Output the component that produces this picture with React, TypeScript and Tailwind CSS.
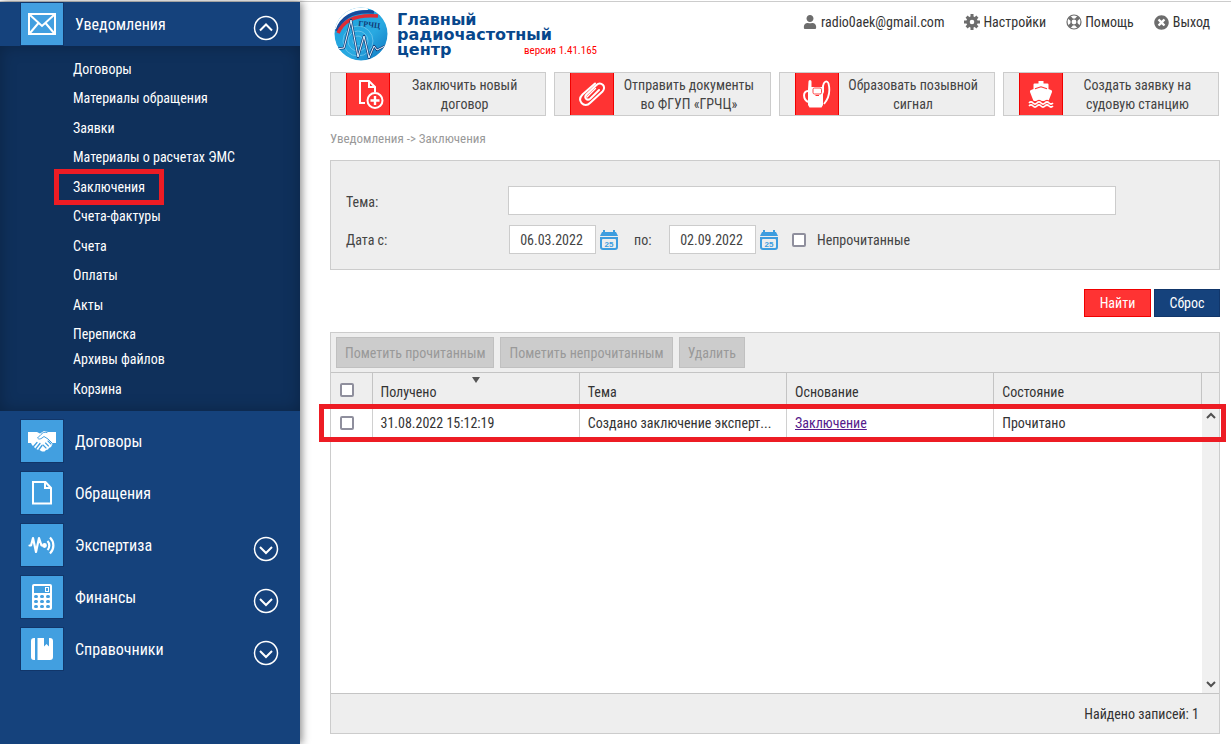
import type { ReactNode } from 'react';
import { FaUser, FaTimesCircle } from 'react-icons/fa';

const submenu = [
    'Договоры',
    'Материалы обращения',
    'Заявки',
    'Материалы о расчетах ЭМС',
    'Заключения',
    'Счета-фактуры',
    'Счета',
    'Оплаты',
    'Акты',
    'Переписка',
];

/* Icons */

function EnvelopeIcon() {
    return (
        <svg width="28" height="22" viewBox="0 0 28 22" fill="none" stroke="#fff" strokeWidth="2">
            <rect x="1" y="1" width="26" height="20" />
            <path d="M2 2l12 11L26 2M2 20l8.500-10M26 20l-8.500-10" />
        </svg>
    );
}

function HandshakeIcon() {
    return (
        <svg width="28" height="22" viewBox="0 0 28 22">
            <path d="M0 2h9l3 1.500L16 1l4 1h8v11h-3l-1 2-1 2-2 1-1 1.500-2 .5-1.500 1.500H14L11.500 20 9 19.500 7 18l-3-3-1-2H0z" fill="#fff" />
            <g fill="none" stroke="#429fe0" strokeLinecap="round">
                <path d="M19 2.500c-3-1-4.500.5-6 2L9.500 8c1 1.500 3 1.200 4.500 0l2-1.500 4 2.500 4.500 4.500" />
                <path d="M5.500 16.500l3.500-4M8 18.500l4-5M11 19.500l3-4" strokeWidth="1.300" />
                <path d="M15 15l3 3M17.500 13l3 3M20 11l3 3" strokeWidth="1.100" />
            </g>
        </svg>
    );
}

function DocumentIcon() {
    return (
        <svg width="22" height="26" viewBox="0 0 22 26" fill="none" stroke="#fff" strokeWidth="2">
            <path d="M2 2h12.500L20 8v15.500H2zM14 2v6h6" />
        </svg>
    );
}

function SignalIcon() {
    return (
        <svg width="28" height="20" viewBox="0 0 28 20" fill="none" stroke="#fff" strokeWidth="2.200" strokeLinejoin="round" strokeLinecap="round">
            <path d="M1.500 10.500h1.500L5 3l3 14 3-14 2.500 7.500h3" />
            <circle cx="16.500" cy="10.500" r="1.300" fill="#fff" />
            <path d="M19.500 6a6.500 6.500 0 0 1 0 9M22 2.500c4.500 4.500 4.500 11.500 0 16" strokeLinecap="butt" />
        </svg>
    );
}

function CalculatorIcon() {
    return (
        <svg width="20" height="26" viewBox="0 0 20 26">
            <rect width="20" height="26" rx="2" fill="#fff" />
            <rect x="2" y="2" width="16" height="7" fill="#429fe0" />
            <rect x="13.500" y="3.500" width="3" height="4" fill="none" stroke="#fff" />
            {[11, 16, 21].map((y) =>
                [2, 8, 14].map((x) => <rect key={`${x}-${y}`} x={x} y={y} width="4" height="3" rx="1.500" fill="#429fe0" />),
            )}
        </svg>
    );
}

function BookIcon() {
    return (
        <svg width="24" height="24" viewBox="0 0 24 24" fill="#fff">
            <path d="M5 1v22H4a3 3 0 0 1-3-3V4a3 3 0 0 1 3-3zM7.500 1H14v8.500l2.500-2.500L19 9.500V1h1a3 3 0 0 1 3 3v16a3 3 0 0 1-3 3H7.500z" />
        </svg>
    );
}

function NewContractIcon() {
    return (
        <svg width="26" height="32" viewBox="0 0 26 32" fill="none" stroke="#fff" strokeWidth="2" className="ml-[6px]">
            <path d="M7 25H2V3h9l6 6v5M11 3v6h6" />
            <circle cx="17" cy="22.500" r="7.500" />
            <path d="M17 18v9M12.500 22.500h9" strokeWidth="2.400" />
        </svg>
    );
}

function ClipIcon() {
    return (
        <svg width="28" height="28" viewBox="0 0 28 28" fill="none" stroke="#fff" strokeWidth="2" strokeLinecap="round">
            <path d="M17 3.500L4.500 14.500c-3 3-3 6-1 8.500 2.500 2.500 6 2.500 8.500 0L24.500 11.500c2-2 2-5 .5-6.500-2-2-4.500-2-6.500 0L8.500 14.500c-1.500 1.500-1.500 3-.5 4.200 1.200 1.200 3 1 4.200 0L21 10" />
            <path d="M9 17l8.500-8.500" strokeWidth="1.400" />
        </svg>
    );
}

function RadioIcon() {
    return (
        <svg width="28" height="28" viewBox="0 0 28 28">
            <path d="M5.500 1.500Q5.500 0 7 0t1.500 1.500V7H19V5.500h2V12l-1 2v11l-1.500 2.500h-12L5 25V9.500z" fill="#fff" />
            <path d="M5 11c-5.500 0-5 8.500 0 11" fill="none" stroke="#fff" strokeWidth="2" />
            <path d="M20 8c0-7 4.500-8 5.500-4.500 1.500 6 1 14-4.500 20.500" fill="none" stroke="#fff" strokeWidth="1.800" />
            <rect x="10" y="8" width="8.500" height="6" rx="1.500" fill="#fff" stroke="#ff3333" strokeWidth="0.900" />
            <path d="M12.500 15.500h3.500" stroke="#ff3333" />
        </svg>
    );
}

function ShipIcon() {
    return (
        <svg width="26" height="28" viewBox="0 0 26 28">
            <path d="M10.500 1h5v2.500h4q1 0 1 1V9l2.500 1q1.500.5 1 2l-3.500 9H5.500L2 12q-.5-1.500 1-2l2.500-1V4.500q0-1 1-1h4z" fill="#fff" />
            <path d="M7 8.700l6-1.900 6 1.900" fill="none" stroke="#ff3333" strokeWidth="1.200" />
            <path d="M1 22.500q2-2 4 0t4 0 4 0 4 0 4 0 4 0" fill="none" stroke="#ff3333" strokeWidth="3.400" />
            <path d="M1 23q2-2 4 0t4 0 4 0 4 0 4 0 4 0M1 26q2-2 4 0t4 0 4 0 4 0 4 0 4 0" fill="none" stroke="#fff" strokeWidth="1.700" />
        </svg>
    );
}

function GearIcon() {
    return (
        <svg width="16" height="16" viewBox="0 0 16 16" fill="none" stroke="#6d6d6d">
            <circle cx="8" cy="8" r="4" strokeWidth="3.400" />
            <path d="M8 0v3M8 13v3M0 8h3M13 8h3M2.600 2.600l2 2M11.400 11.400l2 2M2.600 13.400l2-2M11.400 4.600l2-2" strokeWidth="3" />
        </svg>
    );
}

function LifebuoyIcon() {
    return (
        <svg width="16" height="16" viewBox="0 0 16 16" fill="none" stroke="#6d6d6d">
            <circle cx="8" cy="8" r="7" strokeWidth="1.200" />
            <circle cx="8" cy="8" r="3" strokeWidth="1.200" />
            <path d="M3.300 3.300l2.500 2.500M12.700 3.300l-2.500 2.500M3.300 12.700l2.500-2.500M12.700 12.700l-2.500-2.500" strokeWidth="3.400" />
        </svg>
    );
}

function CalendarIcon() {
    return (
        <svg width="18" height="20" viewBox="0 0 18 20">
            <path d="M3 0h2v2h8V0h2v2h1l2 4H0l2-4h1z" fill="#3d9ddf" />
            <rect x="1" y="8" width="16" height="11" rx="2" fill="#eee" stroke="#3d9ddf" strokeWidth="2" />
            <path d="M0 7h18v2H0z" fill="#3d9ddf" />
            <text x="9" y="17" fontSize="8" fontWeight="bold" textAnchor="middle" fill="#3d9ddf" fontFamily="Liberation Sans, sans-serif">25</text>
        </svg>
    );
}

function Chevron({ up = false }: { up?: boolean }) {
    return (
        <svg width="26" height="26" viewBox="0 0 26 26" fill="none" stroke="#fff">
            <circle cx="13" cy="13" r="11.500" strokeWidth="1.500" />
            <path d={up ? 'M7 15.500l6-6 6 6' : 'M7 11l6 6 6-6'} strokeWidth="2" />
        </svg>
    );
}

function LogoMark() {
    return (
        <svg width="54" height="54" viewBox="0 0 54 54">
            <defs>
                <linearGradient id="globe" x1="0" y1="0" x2="1" y2="1">
                    <stop offset="0" stopColor="#1ba0dc" />
                    <stop offset="0.600" stopColor="#29a9e1" />
                    <stop offset="1" stopColor="#0b72be" />
                </linearGradient>
                <clipPath id="globeClip"><circle cx="27" cy="27" r="26.500" /></clipPath>
            </defs>
            <g clipPath="url(#globeClip)" fill="none">
                <circle cx="27" cy="27" r="27" fill="url(#globe)" />
                <g stroke="#8fd3f2" strokeWidth="0.600">
                    <circle cx="24" cy="34" r="5" />
                    <circle cx="24" cy="34" r="10" />
                    <circle cx="24" cy="34" r="15" />
                </g>
                <path d="M1 22C5 8 17 0 34 1.500" stroke="#fff" strokeWidth="4" />
                <path d="M3 24C7 11 19 3 40 5" stroke="#184a9b" strokeWidth="3.500" />
                <path d="M4 26C9 14 20 7 44 9" stroke="#e02c35" strokeWidth="3.500" />
                <path d="M2 42l8-1 7-28 7 37 6-21 5 22 5-12 3 4 8-4" stroke="#173d78" strokeWidth="2.400" strokeLinejoin="round" />
                <path d="M2 42l8-1 7-28 7 37 6-21 5 22 5-12 3 4 8-4" stroke="#e4f5ff" strokeWidth="1" />
            </g>
            <text x="24" y="19" fontSize="8" fontWeight="bold" fill="#123c78" fontFamily="Liberation Serif, serif" transform="rotate(6 24 19)">ГРЧЦ</text>
        </svg>
    );
}

/* Sidebar */

function MenuItem({ icon, label, chevron }: { icon: ReactNode; label: string; chevron?: 'up' | 'down' }) {
    return (
        <a href="#" className="flex h-11 items-center pl-5 pr-[21px] text-white">
            <span className="flex size-11 items-center justify-center border border-[#11366a] bg-[#429fe0]">{icon}</span>
            <span className="ml-[11px] flex-1 pt-[2px] text-[16px] leading-5">{label}</span>
            {chevron && <span className="pt-2"><Chevron up={chevron === 'up'} /></span>}
        </a>
    );
}

function Sidebar() {
    return (
        <aside className="z-10 w-[300px] shrink-0 bg-[#15427c] shadow-[2px_0_8px_rgba(0,0,0,0.45)]">
            <nav>
                <MenuItem icon={<EnvelopeIcon />} label="Уведомления" chevron="up" />
                <div className="bg-[#0f305b] pb-[2px] pl-[73px] pt-2 text-[14px] leading-5 text-white shadow-[inset_0_0_16px_rgba(0,0,0,0.25)]">
                    <ul className="grid h-[295px] auto-rows-fr items-center">
                        {submenu.map((label) => (
                            <li key={label}>
                                <a href="#" className="relative">
                                    {label}
                                    {label === 'Заключения' && (
                                        <span className="absolute -inset-x-[19px] -inset-y-[10px] border-5 border-[#ed1c24]" />
                                    )}
                                </a>
                            </li>
                        ))}
                    </ul>
                    <a href="#" className="flex h-5 items-center">Архивы файлов</a>
                    <a href="#" className="flex h-10 items-center">Корзина</a>
                </div>
                <div className="flex flex-col gap-2 pt-2">
                    <MenuItem icon={<HandshakeIcon />} label="Договоры" />
                    <MenuItem icon={<DocumentIcon />} label="Обращения" />
                    <MenuItem icon={<SignalIcon />} label="Экспертиза" chevron="down" />
                    <MenuItem icon={<CalculatorIcon />} label="Финансы" chevron="down" />
                    <MenuItem icon={<BookIcon />} label="Справочники" chevron="down" />
                </div>
            </nav>
        </aside>
    );
}

/* Main area */

function Header() {
    return (
        <header className="flex h-[70px] justify-between pl-1 pr-[10px]">
            <div className="flex pt-[5px]">
                <LogoMark />
                <div className="relative ml-[9px] pt-[5px]">
                    <p className="font-['DejaVu_Sans',sans-serif] text-[16px] font-bold leading-[15px] text-[#07478c]">
                        Главный<br />радиочастотный<br />центр
                    </p>
                    <span className="absolute left-[127px] top-9 whitespace-nowrap text-[11px] leading-4 text-[#f00]">версия 1.41.165</span>
                </div>
            </div>
            <div className="flex h-10 items-center gap-5 text-[14px] leading-5 text-[#333]">
                <a href="#" className="flex items-center gap-1"><FaUser size={14} color="#6d6d6d" />radio0aek@gmail.com</a>
                <a href="#" className="flex items-center gap-[3px]"><GearIcon />Настройки</a>
                <a href="#" className="flex items-center gap-[3px]"><LifebuoyIcon />Помощь</a>
                <a href="#" className="flex items-center gap-1"><FaTimesCircle size={15} color="#6d6d6d" />Выход</a>
            </div>
        </header>
    );
}

function ActionButton({ icon, children }: { icon: ReactNode; children: ReactNode }) {
    return (
        <button className="flex h-11 items-stretch border border-[#ccc] bg-[#eee] pl-[15px] text-[14px] leading-[19px] text-[#444]">
            <span className="flex w-11 items-center justify-center border-x border-[#f00000] bg-[#ff3333]">{icon}</span>
            <span className="flex-1 self-center pr-[6px] pt-px">{children}</span>
        </button>
    );
}

function DateField({ id, value }: { id: string; value: string }) {
    return (
        <>
            <input id={id} defaultValue={value} className="h-[29px] w-[87px] border border-[#ccc] bg-white pr-[2px] text-center text-[14px] text-[#444]" />
            <button type="button" aria-label="Календарь" className="ml-1"><CalendarIcon /></button>
        </>
    );
}

const checkbox = 'block size-[14px] appearance-none rounded-[2px] border-2 border-[#8f8f9d] bg-white';

function Filter() {
    return (
        <form>
            <div className="border border-[#ccc] bg-[#eee] pb-[15px] pl-[15px] pt-[25px] text-[14px] leading-5 text-[#444]">
                <div className="flex items-center">
                    <label htmlFor="subject" className="w-[162px] pt-[2px]">Тема:</label>
                    <input id="subject" className="mr-[103px] h-[29px] flex-1 border border-[#ccc] bg-white px-2" />
                </div>
                <div className="mt-[10px] flex items-center">
                    <label htmlFor="from" className="w-[163px]">Дата с:</label>
                    <DateField id="from" value="06.03.2022" />
                    <label htmlFor="to" className="ml-4 w-[35px]">по:</label>
                    <DateField id="to" value="02.09.2022" />
                    <input id="unread" type="checkbox" className={`${checkbox} ml-[14px]`} />
                    <label htmlFor="unread" className="ml-[11px]">Непрочитанные</label>
                </div>
            </div>
            <div className="mt-[19px] flex justify-end gap-[3px] text-[14px] leading-5 text-white">
                <button type="button" className="h-7 w-[67px] border border-[#f00000] bg-[#ff3333]">Найти</button>
                <button type="button" className="h-7 w-[66px] border border-[#11366a] bg-[#15427c]">Сброс</button>
            </div>
        </form>
    );
}

function ToolbarButton({ children }: { children: ReactNode }) {
    return (
        <button disabled className="h-[31px] border border-[#c0c0c0] bg-[#ccc] px-2 text-[14px] leading-5 text-[#999]">{children}</button>
    );
}

function ScrollArrow({ up = false }: { up?: boolean }) {
    return (
        <svg width="10" height="7" viewBox="0 0 10 7" fill="none" stroke="#505050" strokeWidth="2">
            <path d={up ? 'M1 6l4-4 4 4' : 'M1 1l4 4 4-4'} />
        </svg>
    );
}

function Messages() {
    return (
        <section className="mt-[15px] flex flex-1 flex-col border border-[#ccc] bg-[#eee]">
            <div className="flex gap-[6px] p-1 pl-[5px]">
                <ToolbarButton>Пометить прочитанным</ToolbarButton>
                <ToolbarButton>Пометить непрочитанным</ToolbarButton>
                <ToolbarButton>Удалить</ToolbarButton>
            </div>
            <div className="relative flex-1 border-y border-[#c4c4c4] bg-white">
                <table className="w-full table-fixed text-left text-[14px] leading-5 text-[#333]">
                    <colgroup>
                        <col className="w-[41px]" />
                        <col />
                        <col />
                        <col />
                        <col />
                        <col className="w-[18px]" />
                    </colgroup>
                    <thead>
                        <tr className="h-[34px] bg-[#eee] [&>th]:border-r [&>th]:border-[#c4c4c4] [&>th]:font-normal [&>th:last-child]:border-r-0">
                            <th className="pl-[9px]"><input type="checkbox" aria-label="Выбрать все" className={checkbox} /></th>
                            <th className="relative px-2 pt-1">
                                Получено
                                <span className="absolute left-1/2 top-1 -ml-1 border-x-4 border-t-6 border-x-transparent border-t-[#555]" />
                            </th>
                            <th className="px-2 pt-1">Тема</th>
                            <th className="px-2 pt-1">Основание</th>
                            <th className="px-2 pt-1">Состояние</th>
                            <th />
                        </tr>
                    </thead>
                    <tbody>
                        <tr className="relative h-8 [&>td]:border-r [&>td]:border-[#d0d0d0] [&>td:nth-last-child(-n+2)]:border-r-0">
                            <td className="pl-[9px]">
                                <input type="checkbox" aria-label="Выбрать сообщение" className={checkbox} />
                                <span className="pointer-events-none absolute -bottom-[3px] -left-3 -right-[7px] -top-[3px] z-10 border-5 border-[#ed1c24]" />
                            </td>
                            <td className="px-2">31.08.2022 15:12:19</td>
                            <td className="whitespace-nowrap px-2">Создано заключение эксперт...</td>
                            <td className="px-2"><a href="#" className="text-[#551a8b] underline">Заключение</a></td>
                            <td className="px-2">Прочитано</td>
                            <td />
                        </tr>
                    </tbody>
                </table>
                <div className="absolute bottom-0 right-0 top-[34px] flex w-[17px] flex-col items-center justify-between bg-[#f0f0f0] py-[5px]">
                    <ScrollArrow up />
                    <ScrollArrow />
                </div>
            </div>
            <div className="flex h-[39px] items-center justify-end pr-5 pt-px text-[14px] text-[#333]">Найдено записей: 1</div>
        </section>
    );
}

export default function App() {
    return (
        <div className="flex min-h-screen flex-col bg-white pt-px font-['Roboto_Condensed','Liberation_Sans_Narrow',Roboto,sans-serif]">
            <div className="flex flex-1 border-t border-[#ccc]">
                <Sidebar />
                <main className="flex min-w-0 flex-1 flex-col pb-[10px] pl-[30px] pr-[11px]">
                    <Header />
                    <div className="grid grid-cols-4 gap-2 pr-px">
                        <ActionButton icon={<NewContractIcon />}>Заключить новый<br />договор</ActionButton>
                        <ActionButton icon={<ClipIcon />}>Отправить документы<br />во ФГУП «ГРЧЦ»</ActionButton>
                        <ActionButton icon={<RadioIcon />}>Образовать позывной<br />сигнал</ActionButton>
                        <ActionButton icon={<ShipIcon />}>Создать заявку на<br />судовую станцию</ActionButton>
                    </div>
                    <p className="flex h-11 items-center pt-[2px] text-[13px] text-[#999]">Уведомления -&gt; Заключения</p>
                    <Filter />
                    <Messages />
                </main>
            </div>
        </div>
    );
}
